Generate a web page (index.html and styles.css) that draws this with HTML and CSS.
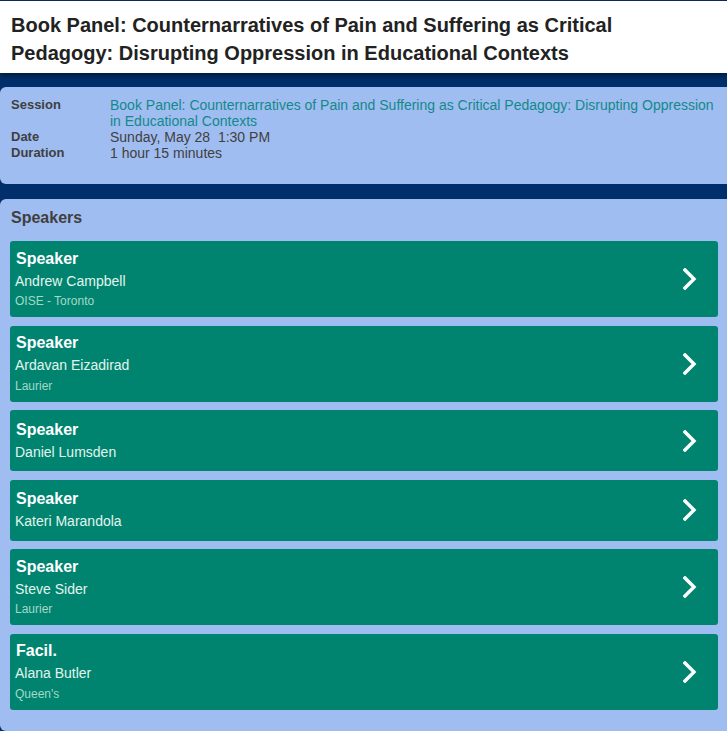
FILE: index.html
```html
<!DOCTYPE html>
<html lang="en">
<head>
<meta charset="utf-8">
<title>Session details</title>
<link rel="stylesheet" href="styles.css">
</head>
<body>
<div class="page">
  <header class="title-bar">
    <h1>Book Panel: Counternarratives of Pain and Suffering as Critical Pedagogy: Disrupting Oppression in Educational Contexts</h1>
  </header>

  <section class="panel info">
    <dl class="facts">
      <dt>Session</dt>
      <dd class="link">Book Panel: Counternarratives of Pain and Suffering as Critical Pedagogy: Disrupting Oppression in Educational Contexts</dd>
      <dt>Date</dt>
      <dd>Sunday, May 28&nbsp; 1:30 PM</dd>
      <dt>Duration</dt>
      <dd>1 hour 15 minutes</dd>
    </dl>
  </section>

  <section class="panel speakers">
    <h2>Speakers</h2>
    <ul class="people">
      <li class="person">
        <div class="who">
          <div class="role">Speaker</div>
          <div class="name">Andrew Campbell</div>
          <div class="org">OISE - Toronto</div>
        </div>
        <svg class="chev" width="14" height="22" viewBox="0 0 14 22"><polyline points="2,2 11,11 2,20"/></svg>
      </li>
      <li class="person">
        <div class="who">
          <div class="role">Speaker</div>
          <div class="name">Ardavan Eizadirad</div>
          <div class="org">Laurier</div>
        </div>
        <svg class="chev" width="14" height="22" viewBox="0 0 14 22"><polyline points="2,2 11,11 2,20"/></svg>
      </li>
      <li class="person">
        <div class="who">
          <div class="role">Speaker</div>
          <div class="name">Daniel Lumsden</div>
        </div>
        <svg class="chev" width="14" height="22" viewBox="0 0 14 22"><polyline points="2,2 11,11 2,20"/></svg>
      </li>
      <li class="person">
        <div class="who">
          <div class="role">Speaker</div>
          <div class="name">Kateri Marandola</div>
        </div>
        <svg class="chev" width="14" height="22" viewBox="0 0 14 22"><polyline points="2,2 11,11 2,20"/></svg>
      </li>
      <li class="person">
        <div class="who">
          <div class="role">Speaker</div>
          <div class="name">Steve Sider</div>
          <div class="org">Laurier</div>
        </div>
        <svg class="chev" width="14" height="22" viewBox="0 0 14 22"><polyline points="2,2 11,11 2,20"/></svg>
      </li>
      <li class="person">
        <div class="who">
          <div class="role">Facil.</div>
          <div class="name">Alana Butler</div>
          <div class="org">Queen's</div>
        </div>
        <svg class="chev" width="14" height="22" viewBox="0 0 14 22"><polyline points="2,2 11,11 2,20"/></svg>
      </li>
    </ul>
  </section>
</div>
</body>
</html>
```

FILE: styles.css
```css
html, body {
  margin: 0;
  padding: 0;
}

body {
  background: #002f6b;
  font-family: "Liberation Sans", Arial, sans-serif;
  overflow-x: hidden;
}

.page {
  border-top: 1px solid #0a2a5c;
  overflow: hidden;
  padding-bottom: 20px;
}

/* white title strip */
.title-bar {
  background: #ffffff;
  padding: 10px 11px 6px;
  box-shadow: 0 2px 6px rgba(0, 0, 0, 0.55);
  position: relative;
  z-index: 1;
}

.title-bar h1 {
  margin: 0;
  font-size: 20px;
  line-height: 28px;
  font-weight: bold;
  color: #222222;
}

/* light blue panels running past the right edge */
.panel {
  background: #a0bdf1;
  border-radius: 6px;
  margin-right: -8px;
}

.info {
  margin-top: 14px;
  padding: 10px 19px 23px 11px;
}

.facts {
  display: grid;
  grid-template-columns: 99px 1fr;
  margin: 0;
  font-size: 14px;
  line-height: 16px;
  color: #404040;
}

.facts dt {
  font-weight: bold;
  font-size: 13px;
  color: #3f3f3f;
}

.facts dd {
  margin: 0;
}

.facts dd.link {
  color: #12898a;
}

.speakers {
  margin-top: 15px;
  padding: 9px 17px 21px 10px;
}

.speakers h2 {
  margin: 0 0 13px 1px;
  font-size: 16px;
  line-height: 20px;
  font-weight: bold;
  color: #3f3f3f;
}

.people {
  list-style: none;
  margin: 0;
  padding: 0;
  display: flex;
  flex-direction: column;
  gap: 8.5px;
}

.person {
  background: #00846f;
  border-radius: 3px;
  min-height: 61px;
  box-sizing: border-box;
  padding: 7.5px 21px 7px 5px;
  display: flex;
  align-items: center;
  justify-content: space-between;
}

.role {
  font-size: 16px;
  line-height: 20px;
  font-weight: bold;
  color: #ffffff;
  padding-left: 1px;
  margin-bottom: 2px;
}

.name {
  font-size: 14px;
  line-height: 20px;
  color: #e2f4ee;
}

.org {
  font-size: 12px;
  line-height: 18px;
  margin-top: 1.5px;
  color: #a3d9c8;
}

.chev {
  flex: none;
}

.chev polyline {
  fill: none;
  stroke: #ffffff;
  stroke-width: 3.4;
  stroke-linecap: square;
  stroke-linejoin: miter;
}
```
